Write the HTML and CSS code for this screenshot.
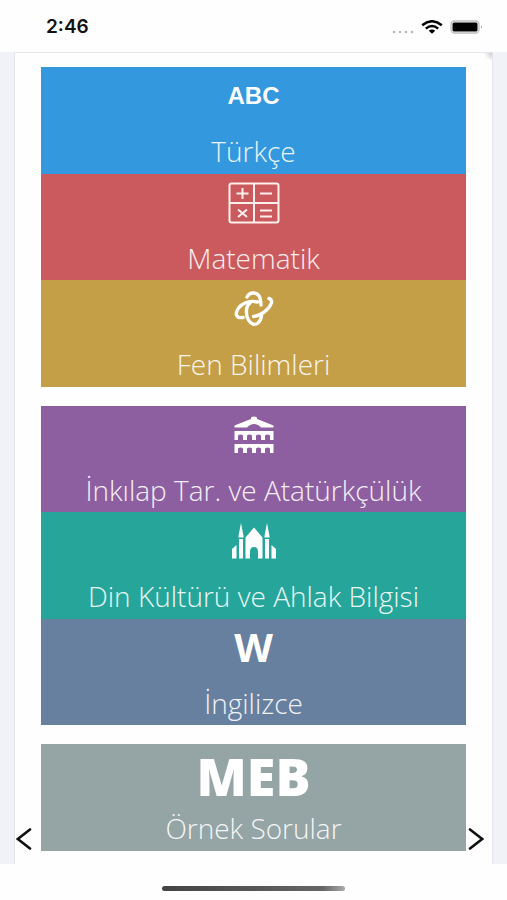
FILE: index.html
```html
<!DOCTYPE html>
<html lang="tr">
<head>
<meta charset="utf-8">
<meta name="viewport" content="width=device-width, initial-scale=1">
<title>Dersler</title>
<link rel="stylesheet" href="styles.css">
</head>
<body>
<header class="status">
  <time class="clock">2:46</time>
  <div class="indicators">
    <svg width="22" height="4" viewBox="0 0 22 4" fill="#b9b9bb" aria-hidden="true"><circle cx="2" cy="2" r="1.3"/><circle cx="8" cy="2" r="1.3"/><circle cx="14" cy="2" r="1.3"/><circle cx="20" cy="2" r="1.3"/></svg>
    <svg width="22" height="14" viewBox="0 0 22 14" fill="none" stroke="#000" stroke-width="2.4" aria-hidden="true"><path d="M1.2 5.2Q11-2.8 20.8 5.2M4.8 8.6Q11 3.400 17.200 8.600"/><path d="M7.700 10.800Q11 8.200 14.300 10.800L11 13.800Z" fill="#000" stroke="none"/></svg>
    <svg width="34" height="14" viewBox="0 0 34 14" aria-hidden="true"><rect x="1" y="1" width="28" height="12" rx="3.5" fill="#fff" stroke="#bdbdbd" stroke-width="1.3"/><rect x="2.5" y="2.500" width="25" height="9" rx="1.5"/><path d="M31 5.500q2 1.500 0 3z" fill="#999"/></svg>
  </div>
</header>
<div class="screen">
  <main class="card">
    <nav class="group">
      <a class="tile blue" href="#turkce"><span class="icon abc">ABC</span><span class="label">Türkçe</span></a>
      <a class="tile red" href="#matematik"><span class="icon">
        <svg width="52" height="42" viewBox="0 0 52 42" fill="none" stroke="#fff0ec" stroke-width="2" aria-hidden="true"><rect x="1.5" y="1.5" width="49" height="39" rx="2"/><path d="M26 1v40M1 21h50M8.500 11.500h12M14.500 6v11M32 11.500h12M10 27.500l9 7.500M19 27.500L10 35M32 28.500h12M32 34.500h12"/></svg>
      </span><span class="label">Matematik</span></a>
      <a class="tile gold" href="#fen"><span class="icon">
        <svg width="40" height="36" viewBox="0 0 40 36" fill="none" stroke="#fff" stroke-width="3.4" stroke-linecap="round" stroke-linejoin="round" aria-hidden="true"><path d="M13 6C14.500 3 17 1.700 20 2C25 2.500 26.500 6 27 14"/><path d="M35 7.500C40 9 37 15 32.500 19C29 22.500 26 24.500 19.500 25.500"/><path d="M23.500 11C17 9.500 10 11 5 16.500C.5 22 1.500 27.500 9 26.500"/><path d="M16 12C11.500 15 11.500 24 14.500 29C17 33.500 21 34.500 24 32C26.500 30 27 28 27.500 25"/></svg>
      </span><span class="label">Fen Bilimleri</span></a>
    </nav>
    <nav class="group">
      <a class="tile purple" href="#inkilap"><span class="icon">
        <svg width="40" height="38" viewBox="0 0 40 38" fill="#fff" aria-hidden="true"><path d="M.5 11.500V9.500L17 3V1.500Q20-.5 23 1.500V3L39.500 9.500v2H27Q24 8 20 8T13 11.500Z"/><path id="arcade" d="M.5 15h39v9H36v-4.500q-2.500-2-5 0V24h-4v-4.500q-2.500-2-5 0V24h-4v-4.500q-2.500-2-5 0V24H9v-4.500q-2.500-2-5 0V24H.5Z"/><use href="#arcade" y="13"/></svg>
      </span><span class="label">İnkılap Tar. ve Atatürkçülük</span></a>
      <a class="tile teal" href="#din"><span class="icon">
        <svg width="44" height="36" viewBox="0 0 44 36" fill="#fff" aria-hidden="true"><path d="M0 35.500V26l4.500-4v13.500ZM44 35.500V26l-4.500-4v13.500ZM7 35.500V16h4v19.500ZM37 35.500V16h-4v19.500ZM6.500 14.500V13L9 0l2.500 13v1.500ZM37.500 14.500V13L35 0l-2.500 13v1.500Z"/><path d="M13.500 35.500V14.500L22 4.500l8.500 10v21H26V29q0-5-4-5t-4 5v6.500Z"/></svg>
      </span><span class="label">Din Kültürü ve Ahlak Bilgisi</span></a>
      <a class="tile slate" href="#ingilizce"><span class="icon letter">W</span><span class="label">İngilizce</span></a>
    </nav>
    <nav class="group single">
      <a class="tile gray" href="#meb"><span class="icon meb">MEB</span><span class="label">Örnek Sorular</span></a>
    </nav>
  </main>
  <button class="arrow prev" type="button" aria-label="Önceki"><svg width="16" height="22" viewBox="0 0 16 22" fill="none" stroke="#111" stroke-width="2.6" stroke-linecap="round"><path d="M14 1.500L1.800 11 14 20.500"/></svg></button>
  <button class="arrow next" type="button" aria-label="Sonraki"><svg width="16" height="22" viewBox="0 0 16 22" fill="none" stroke="#111" stroke-width="2.6" stroke-linecap="round"><path d="M2 1.500L14.200 11 2 20.500"/></svg></button>
</div>
<footer class="home"><span class="bar"></span></footer>
</body>
</html>
```
FILE: styles.css
```css
* { box-sizing: border-box; }

body {
  margin: 0;
  min-height: 100vh;
  display: flex;
  flex-direction: column;
  background: #fefefe;
  font-family: "Open Sans", "Noto Sans", sans-serif;
}

.status {
  display: flex;
  align-items: center;
  justify-content: space-between;
  height: 52px;
  padding: 2px 23px 0 46px;
}

.clock {
  font: 600 19px/24px Inter, "Liberation Sans", sans-serif;
  color: #111;
}

.indicators {
  display: flex;
  align-items: center;
  gap: 7px;
}

.indicators svg:first-child {
  align-self: flex-end;
}

.screen {
  position: relative;
  flex: 1;
  display: flex;
  padding: 0 14px;
  background: #f1f2f8;
}

.card {
  flex: 1;
  display: flex;
  flex-direction: column;
  gap: 19px;
  padding: 14px 26px 13px;
  background: radial-gradient(circle at 100% 0, #ccc 0, #fefefe 8px);
  border: 1px solid #e4e4ea;
  border-bottom: 0;
}

.group {
  flex: 3 0 0;
  display: flex;
  flex-direction: column;
}

.group.single {
  flex-grow: 1;
}

.tile {
  flex: 1 0 0;
  display: flex;
  flex-direction: column;
  align-items: center;
  color: #fff;
  text-decoration: none;
}

.blue { background: #3498de; }
.red { background: #cb5a5e; }
.gold { background: #c49f47; }
.purple { background: #8e5fa0; }
.teal { background: #26a69a; }
.slate { background: #67809f; }
.gray { background: #95a5a6; }

.icon {
  display: flex;
  align-items: center;
  justify-content: center;
  height: 58px;
  font-weight: 700;
}

.abc {
  font-family: "Liberation Sans", sans-serif;
  font-size: 24px;
}

.letter {
  font-size: 40px;
  line-height: 54px;
  padding-bottom: 2px;
}

.meb {
  height: 62px;
  margin-bottom: -4px;
  font-size: 52px;
  font-weight: 800;
}

.label {
  padding-top: 8px;
  font-size: 28px;
  font-weight: 300;
  line-height: 36px;
  white-space: nowrap;
  opacity: 0.9;
}

.arrow {
  position: absolute;
  bottom: 14px;
  display: flex;
  padding: 0;
  border: 0;
  background: none;
}

.prev { left: 16px; }
.next { right: 23px; }

.home {
  display: flex;
  justify-content: center;
  height: 36px;
  padding-top: 22px;
}

.bar {
  width: 36%;
  height: 5px;
  border-radius: 3px;
  background: linear-gradient(90deg, #444 0%, #666 88%, #aaa 100%);
}
```
